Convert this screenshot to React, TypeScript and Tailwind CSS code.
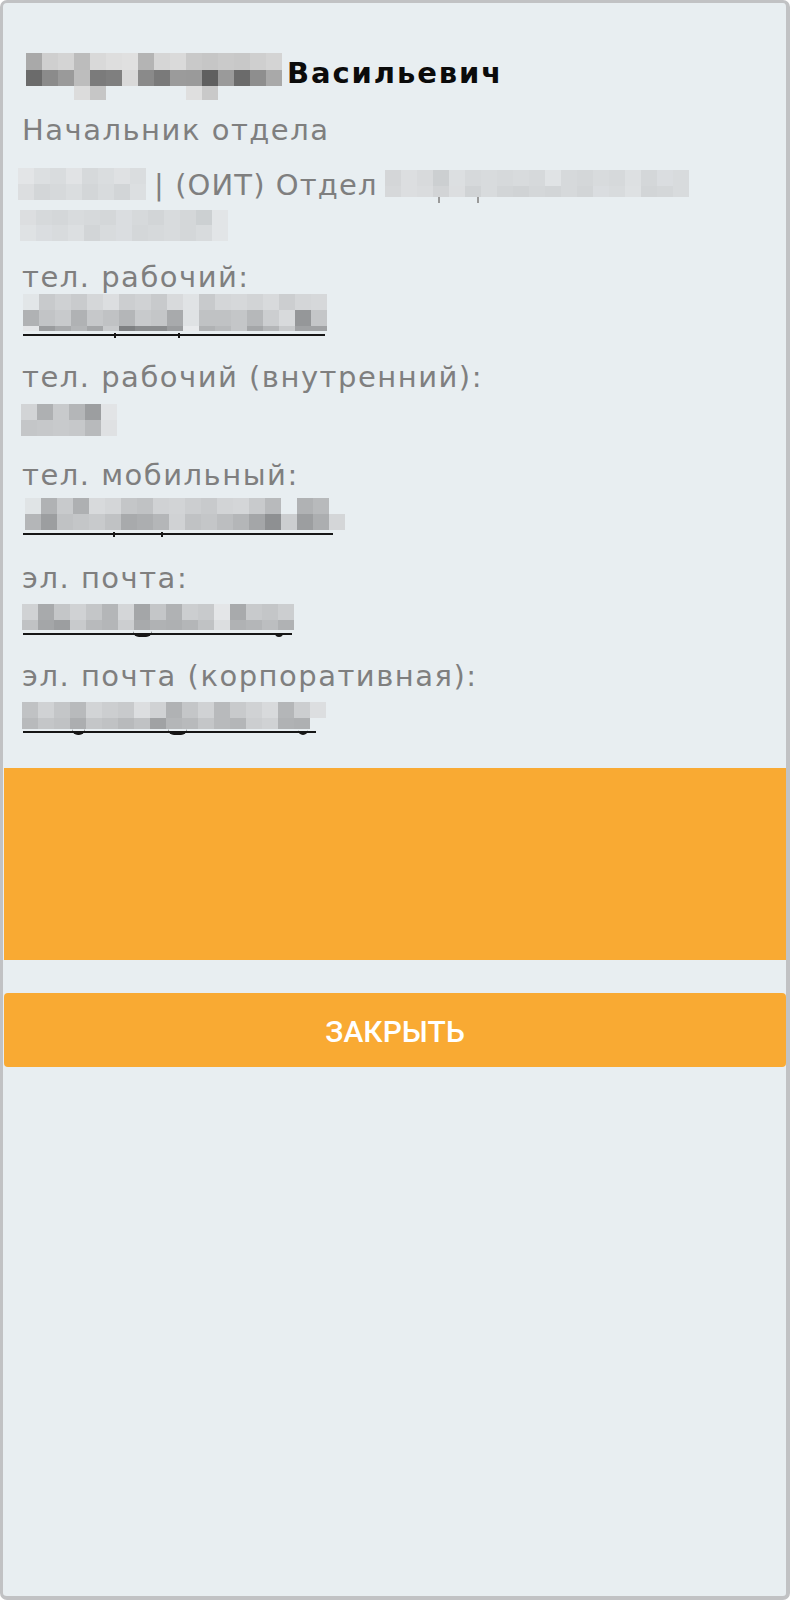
import React from "react";

type Cell = string | null;

const parse = (s: string): Cell[] =>
  s
    .trim()
    .split(/\s+/)
    .map((x) => (x === "_" ? null : "#" + x));

function Mosaic({
  rows,
  heights,
  className,
  children,
}: {
  rows: string[];
  heights: number[];
  className?: string;
  children?: React.ReactNode;
}) {
  return (
    <div className={"relative flex flex-col shrink-0 self-start " + (className ?? "")}>
      {rows.map((r, i) => (
        <div key={i} className="flex" style={{ height: heights[i] }}>
          {parse(r).map((c, j) => (
            <div
              key={j}
              className="w-4 h-full shrink-0"
              style={{ backgroundColor: c ?? "transparent" }}
            />
          ))}
        </div>
      ))}
      {children}
    </div>
  );
}

function Underline({
  width,
  className,
  children,
}: {
  width: number;
  className?: string;
  children?: React.ReactNode;
}) {
  return (
    <div
      className={"relative h-[2px] bg-[#161616] ml-[1px] " + (className ?? "")}
      style={{ width }}
    >
      {children}
    </div>
  );
}

const Tick = ({ left }: { left: number }) => (
  <span className="absolute top-[-1px] w-[2px] h-[5px] bg-[#161616]" style={{ left }} />
);

const Arc = ({ left, width }: { left: number; width: number }) => (
  <span
    className="absolute top-[-2px] h-[6px] border-b-2 border-[#161616] rounded-b-full"
    style={{ left, width }}
  />
);

const Label = ({ children, className }: { children: React.ReactNode; className?: string }) => (
  <div className={"text-[29px] leading-[36px] tracking-[1.5px] text-[#7f7f7f] whitespace-nowrap " + (className ?? "")}>
    {children}
  </div>
);

const nameRows = [
  "a9a9a9 cfcfcf d4d4d4 bcbcbc d9d9d9 dedede e0e0e0 b4b4b4 d6d6d6 dadada c9c9c9 c6c6c6 cacaca c8c8c8 cfcfcf d4d4d4",
  "6b6b6b 8b8b8b 9a9a9a bdbdbd 7b7b7b 7f7f7f d9d9d9 8a8a8a 7a7a7a 9b9b9b 9a9a9a 5f5f5f 9a9a9a 6b6b6b 8e8e8e a9a9a9",
  "_ _ _ dcdcdc c6c6c6 _ _ _ _ _ dfdfdf c9c9c9 _ _ _ _",
];

const dept1Rows = [
  "e3e5e7 dcdfe1 d9dcde e1e3e5 d6d9db dadddf dfe1e3 dadddf",
  "dcdee0 d3d6d8 d6d9db dadddf d3d6d8 d8dbdd d2d5d7 dcdfe1",
];

const dept2Rows = [
  "d4d6d8 dcdee0 d8dadc cccfd1 dcdfe1 d6d9db d8dbdd d6d9db d8dbdd d6d9db e0e3e5 d6d9db d4d7d9 d8dbdd d6d9db dde0e2 d4d7d9 dadde0 d8dbdd",
  "d6d8da dcdee0 dadcde d2d4d6 dcdee0 d0d3d5 d8dbdd d2d5d7 d0d3d5 d4d7d9 d2d5d7 d6d9db d2d5d7 dadde0 d8dbdd dee1e3 d2d5d7 d4d7d9 d8dbdd",
];

const dept3Rows = [
  "dcdee0 d6d9db d4d7d9 d8dbdd d6d9db d4d7d9 dadde0 d6d9db d2d5d7 d8dbdd d4d7d9 ccd0d2 e2e5e7",
  "dfe2e4 dadde0 d8dbdd dcdfe1 d2d5d7 d8dbdd dadde0 d4d7d9 d6d9db d8dbdd d4d7d9 d8dbdd e2e5e7",
];

const telRows = [
  "e2e6e8 c8cacc cfd1d3 c9cbcd d5d7d9 dcdee0 ccced0 d0d2d4 c8cacc d8dadc e0e3e5 c8cacc d4d6d8 d6d8da d2d4d6 d8dadc ccced0 d4d6d8 d6d8da",
  "b0b2b4 c2c4c6 c8cacc b0b2b4 c6c8ca c0c2c4 b4b6b8 c8cacc c4c6c8 a8aaac dfe2e4 c0c2c4 c0c2c4 c4c6c8 b6b8ba ccced0 d8dadc 959799 c4c6c8",
  "e4e6e8 9a9c9e a8aaac b4b6b8 a4a6a8 c8cacc 7e8082 8a8c8e 8a8c8e 9a9c9e e8eaec b0b2b4 b8babc c4c6c8 a4a6a8 b4b6b8 c8cacc a0a2a4 a0a2a4",
];

const intRows = [
  "d2d4d6 aeb0b2 c8cacc b4b6b8 9c9ea0 e2e4e6",
  "c4c6c8 c6c8ca c8cacc c6c8ca b8babc dfe1e3",
];

const mobRows = [
  "e0e4e6 b0b2b4 c8cacc aeb0b2 d8dadc d4d6d8 c4c6c8 c0c2c4 d0d2d4 d2d4d6 ccced0 c8cacc d2d4d6 d4d6d8 c8cacc b8babc _ b0b2b4 b8babc _",
  "b4b6b8 9c9ea0 c0c2c4 c4c6c8 c8cacc c0c2c4 a8aaac acaeb0 b4b6b8 d0d2d4 c0c2c4 c4c6c8 bcbec0 b4b6b8 a4a6a8 8e9092 ccced0 9c9ea0 acaeb0 d4d6d8",
];

const mailRows = [
  "d0d2d4 a8aaac c4c6c8 d0d2d4 c4c6c8 b4b6b8 d4d6d8 a4a6a8 c4c6c8 b0b2b4 ccced0 c8cacc e4e6e8 a8aaac c8cacc c4c6c8 ccced0",
  "c0c2c4 a4a6a8 9c9ea0 c8cacc b8babc b4b6b8 ccced0 a8aaac b0b2b4 aeb0b2 b4b6b8 c0c2c4 dcdee0 b0b2b4 b4b6b8 bcbec0 b0b2b4",
];

const corpRows = [
  "c0c2c4 d0d2d4 c4c6c8 b8babc d2d4d6 ccced0 c8cacc dcdee0 d0d2d4 b0b2b4 c4c6c8 d0d2d4 b8babc c8cacc d0d2d4 d8dadc b4b6b8 ccced0 dcdee0",
  "b8babc c4c6c8 c0c2c4 acaeb0 c4c6c8 c0c2c4 b8babc c0c2c4 a0a2a4 b4b6b8 b8babc c4c6c8 b8babc b4b6b8 ccced0 d0d2d4 b0b2b4 aeb0b2 _",
];

export default function App() {
  return (
    <div className="w-[790px] h-[1600px] bg-[#e8eef1] border-t-[3px] border-l-[3px] border-r-[4px] border-b-[4px] border-[#c1c2c4] rounded-[7px] overflow-hidden flex flex-col font-['DejaVu_Sans',sans-serif]">
      <div className="flex flex-col pl-[19px] pt-[50px]">
        {/* Name */}
        <div className="flex items-start">
          <Mosaic rows={nameRows} heights={[17, 16, 14]} className="ml-[4px]" />
          <span className="ml-[5px] mt-[2px] text-[29px] leading-[36px] font-bold tracking-[1.9px] text-[#0b0b0b] whitespace-nowrap">
            Васильевич
          </span>
        </div>

        <Label className="mt-[12px]">Начальник отдела</Label>

        {/* Department */}
        <div className="mt-[19px] flex items-start h-[36px]">
          <Mosaic rows={dept1Rows} heights={[16, 16]} className="-ml-[4px] mt-[1px]" />
          <span className="ml-[8px] text-[29px] leading-[36px] tracking-[1.1px] text-[#7f7f7f] whitespace-nowrap">
            | (ОИТ) Отдел
          </span>
          <Mosaic rows={dept2Rows} heights={[16, 11]} className="ml-[7px] mt-[3px]">
            <span className="absolute left-[53px] top-[27px] w-[2px] h-[6px] bg-[#9a9a9a]" />
            <span className="absolute left-[92px] top-[27px] w-[2px] h-[6px] bg-[#9a9a9a]" />
          </Mosaic>
        </div>
        <Mosaic rows={dept3Rows} heights={[15, 16]} className="mt-[7px] -ml-[2px]" />

        {/* Work phone */}
        <Label className="mt-[18px]">тел. рабочий:</Label>
        <Mosaic rows={telRows} heights={[16, 16, 5]} className="-mt-[1px] ml-[1px]" />
        <Underline width={302} className="mt-[3px]">
          <Tick left={91} />
          <Tick left={155} />
        </Underline>

        {/* Internal */}
        <Label className="mt-[23px]">тел. рабочий (внутренний):</Label>
        <Mosaic rows={intRows} heights={[16, 16]} className="mt-[9px] -ml-[1px]" />

        {/* Mobile */}
        <Label className="mt-[21px]">тел. мобильный:</Label>
        <Mosaic rows={mobRows} heights={[16, 16]} className="mt-[5px] ml-[3px]" />
        <Underline width={310} className="mt-[3px]">
          <Tick left={90} />
          <Tick left={138} />
        </Underline>

        {/* Email */}
        <Label className="mt-[25px]">эл. почта:</Label>
        <Mosaic rows={mailRows} heights={[16, 10]} className="mt-[8px]" />
        <Underline width={269} className="mt-[3px]">
          <Arc left={110} width={19} />
          <Arc left={252} width={8} />
        </Underline>

        {/* Corporate email */}
        <Label className="mt-[23px]">эл. почта (корпоративная):</Label>
        <Mosaic rows={corpRows} heights={[16, 11]} className="mt-[8px]" />
        <Underline width={293} className="mt-[2px]">
          <Arc left={49} width={13} />
          <Arc left={145} width={19} />
          <Arc left={275} width={10} />
        </Underline>
      </div>

      {/* Orange band */}
      <div className="mt-[35px] ml-px h-[192px] bg-[#f9aa33]" />

      {/* Close button */}
      <button
        type="button"
        className="mt-[33px] ml-px h-[74px] rounded-[4px] bg-[#f9aa33] flex items-center justify-center pt-[4px]"
      >
        <span className="font-['Roboto',sans-serif] font-medium text-[30px] leading-none text-white">
          ЗАКРЫТЬ
        </span>
      </button>
    </div>
  );
}
